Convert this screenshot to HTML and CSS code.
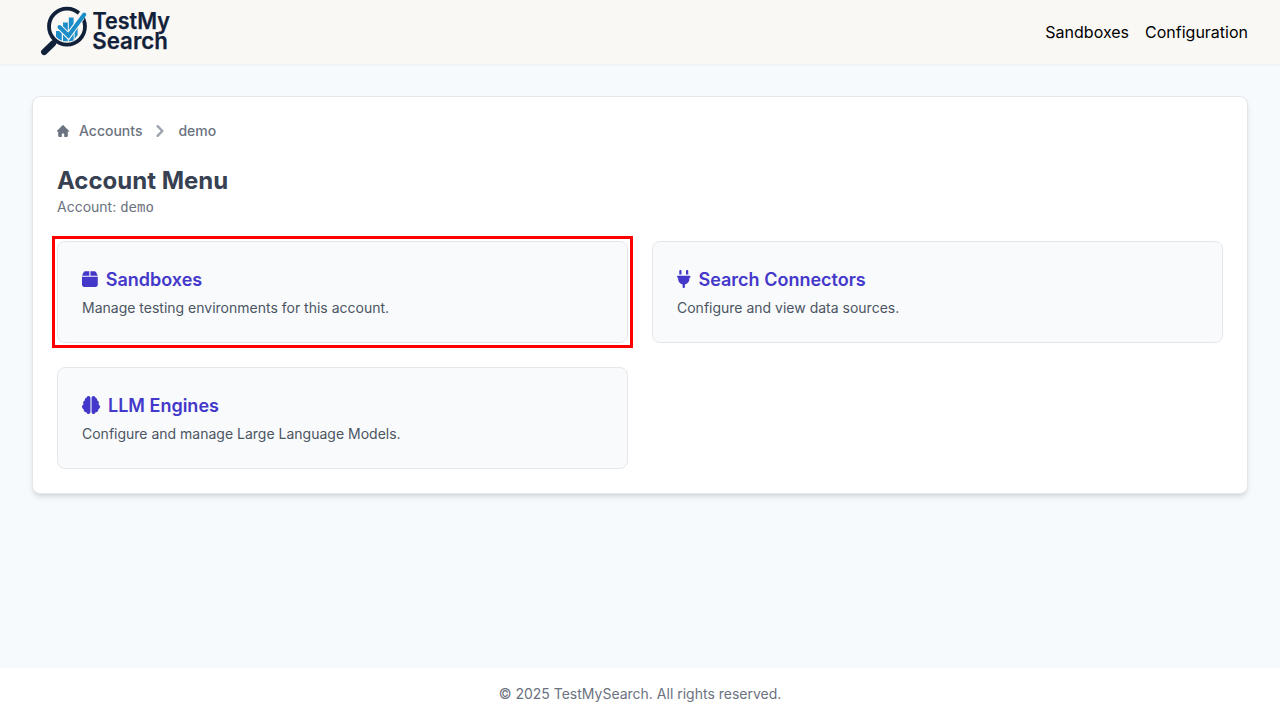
FILE: index.html
```html
<!DOCTYPE html>
<html lang="en">
<head>
<meta charset="utf-8">
<title>Account Menu - TestMySearch</title>
<link rel="stylesheet" href="styles.css">
</head>
<body>
<header class="header">
  <a class="brand" aria-label="TestMySearch">
    <svg class="logo" viewBox="0 0 160 64">
      <circle class="lens" cx="35" cy="26.6" r="18"/>
      <path class="lens-gap" d="M40 28L55 8.500"/>
      <path class="handle" d="M12.200 52L21 43.500"/>
      <path class="neck" d="M19 45L24 39.500"/>
      <path class="bars" d="M24 31h5.800v9.800q-3.500-1.200-5.800-4zM31 22.500h4.800v18.800h-4.800zM36.800 17.500h4.800V40.500l-4.800 1zM42.600 24l3-3v14l-3 4z"/>
      <path class="check-gap" d="M27.500 27L36.500 35.800L50 17"/>
      <path class="check" d="M27.500 27L36.500 35.800L52.300 14.500"/>
      <text class="logo-text" x="60.5" y="29" textLength="77.5" lengthAdjust="spacingAndGlyphs">TestMy</text>
      <text class="logo-text" x="60.3" y="49.3" textLength="75.5" lengthAdjust="spacingAndGlyphs">Search</text>
    </svg>
  </a>
  <nav class="nav"><a>Sandboxes</a><a>Configuration</a></nav>
</header>
<main class="main">
  <section class="panel">
    <nav class="breadcrumb">
      <svg class="home" viewBox="0 0 20 20"><path d="m19.707 9.293-2-2-7-7a1 1 0 0 0-1.414 0l-7 7-2 2a1 1 0 0 0 1.414 1.414L2 10.414V18a2 2 0 0 0 2 2h3a1 1 0 0 0 1-1v-4a1 1 0 0 1 1-1h2a1 1 0 0 1 1 1v4a1 1 0 0 0 1 1h3a2 2 0 0 0 2-2v-7.586l.293.293a1 1 0 0 0 1.414-1.414Z"/></svg>
      <a>Accounts</a>
      <svg class="chevron" viewBox="0 0 20 20"><path d="M7.293 14.707a1 1 0 010-1.414L10.586 10 7.293 6.707a1 1 0 011.414-1.414l4 4a1 1 0 010 1.414l-4 4a1 1 0 01-1.414 0z"/></svg>
      <span>demo</span>
    </nav>
    <h1 class="title">Account Menu</h1>
    <p class="subtitle">Account: <span class="mono">demo</span></p>
    <div class="grid">
      <a class="card highlighted">
        <h2 class="card-title"><svg class="icon" viewBox="0 0 448 512"><path d="M50.7 58.5L0 160H208V32H93.7C75.5 32 58.9 42.3 50.7 58.5zM240 160H448L397.3 58.5C389.1 42.3 372.5 32 354.3 32H240V160zm208 32H0V416c0 35.3 28.7 64 64 64H384c35.3 0 64-28.7 64-64V192z"/></svg>Sandboxes</h2>
        <p class="card-text">Manage testing environments for this account.</p>
      </a>
      <a class="card">
        <h2 class="card-title"><svg class="icon" viewBox="0 0 384 512"><path d="M96 0C78.3 0 64 14.3 64 32v96h64V32c0-17.7-14.3-32-32-32zM288 0c-17.7 0-32 14.3-32 32v96h64V32c0-17.7-14.3-32-32-32zM32 160c-17.7 0-32 14.3-32 32s14.3 32 32 32v32c0 77.4 55 142 128 156.8V480c0 17.7 14.3 32 32 32s32-14.3 32-32V412.8C297 398 352 333.4 352 256V224c17.7 0 32-14.3 32-32s-14.3-32-32-32H32z"/></svg>Search Connectors</h2>
        <p class="card-text">Configure and view data sources.</p>
      </a>
      <a class="card">
        <h2 class="card-title"><svg class="icon" viewBox="0 0 512 512"><path d="M184 0c30.900 0 56 25.100 56 56V456c0 30.900-25.100 56-56 56c-28.900 0-52.700-21.900-55.700-50.100c-5.200 1.400-10.700 2.100-16.300 2.100c-35.300 0-64-28.700-64-64c0-7.400 1.300-14.600 3.600-21.200C21.400 367.400 0 338.200 0 304c0-31.900 18.700-59.500 45.800-72.300C37.100 220.800 32 207 32 192c0-30.700 21.600-56.300 50.400-62.600C80.800 123.900 80 118 80 112c0-29.900 20.600-55.100 48.300-62.100C131.300 21.900 155.100 0 184 0zM328 0c28.900 0 52.600 21.900 55.700 49.900c27.800 7 48.300 32.100 48.300 62.100c0 6-.8 11.900-2.400 17.400c28.800 6.200 50.400 31.900 50.400 62.600c0 15-5.100 28.800-13.800 39.700C493.300 244.500 512 272.100 512 304c0 34.200-21.400 63.400-51.600 74.800c2.300 6.600 3.600 13.800 3.600 21.200c0 35.300-28.700 64-64 64c-5.600 0-11.100-.7-16.300-2.100c-3 28.200-26.800 50.100-55.700 50.100c-30.900 0-56-25.100-56-56V56c0-30.900 25.100-56 56-56z"/></svg>LLM Engines</h2>
        <p class="card-text">Configure and manage Large Language Models.</p>
      </a>
    </div>
  </section>
</main>
<footer class="footer">© 2025 TestMySearch. All rights reserved.</footer>
</body>
</html>
```

FILE: styles.css
```css
* { box-sizing: border-box; margin: 0; padding: 0; }
body {
  min-height: 100vh;
  display: flex;
  flex-direction: column;
  background: #f6fafd;
  font-family: Inter, "Liberation Sans", sans-serif;
  font-size: 16px;
  line-height: 24px;
  color: #000;
}
svg { display: block; flex: none; fill: currentColor; }
.header {
  height: 64px;
  padding: 0 32px;
  display: flex;
  align-items: center;
  justify-content: space-between;
  background: #faf8f4;
  box-shadow: 0 1px 2px rgba(0, 0, 0, .05);
}
.logo { width: 160px; height: 64px; }
.lens { fill: none; stroke: #12213a; stroke-width: 3.8; }
.lens-gap { fill: none; stroke: #faf8f4; stroke-width: 7; }
.handle { stroke: #12213a; stroke-width: 6.2; stroke-linecap: round; }
.neck { stroke: #12213a; stroke-width: 3.5; }
.bars { fill: #1d8dc8; }
.check-gap { fill: none; stroke: #faf8f4; stroke-width: 6; }
.check { fill: none; stroke: #1d8dc8; stroke-width: 4; stroke-linecap: round; }
.logo-text { fill: #12213a; font-size: 23px; font-weight: 600; stroke: #12213a; stroke-width: .25px; }
.nav { display: flex; gap: 16px; }
.main { flex: 1; padding: 32px; }
.panel {
  padding: 24px;
  background: #fff;
  border: 1px solid #e5e7eb;
  border-radius: 8px;
  box-shadow: 0 4px 6px -1px rgba(0, 0, 0, .1), 0 2px 4px -2px rgba(0, 0, 0, .1);
}
.breadcrumb {
  display: flex;
  align-items: center;
  height: 20px;
  margin-bottom: 24px;
  font-size: 14px;
  line-height: 20px;
  font-weight: 500;
  color: #6b7280;
}
.home { width: 12px; height: 12px; margin-right: 10px; }
.chevron { width: 24px; height: 24px; margin: 0 6px; color: #9ca3af; }
.title { font-size: 24px; line-height: 32px; font-weight: 700; color: #374151; }
.subtitle { font-size: 14px; line-height: 20px; height: 20px; color: #6b7280; }
.mono { font-family: "DejaVu Sans Mono", "Liberation Mono", monospace; }
.grid { margin-top: 24px; display: grid; grid-template-columns: 1fr 1fr; gap: 24px; }
.card {
  display: block;
  padding: 24px;
  background: #f9fafb;
  border: 1px solid #e5e7eb;
  border-radius: 8px;
}
.highlighted { position: relative; }
.highlighted::after { content: ""; position: absolute; inset: -6px; border: 3px solid #f00; }
.card-title {
  display: flex;
  align-items: center;
  gap: 8px;
  font-size: 18px;
  line-height: 28px;
  font-weight: 600;
  color: #4338ca;
}
.icon { height: 18px; width: auto; margin-bottom: 2px; }
.card-text { margin-top: 4px; font-size: 14px; line-height: 20px; color: #4b5563; }
.footer {
  padding: 16px;
  background: #fff;
  text-align: center;
  font-size: 14px;
  line-height: 20px;
  color: #6b7280;
}
```
